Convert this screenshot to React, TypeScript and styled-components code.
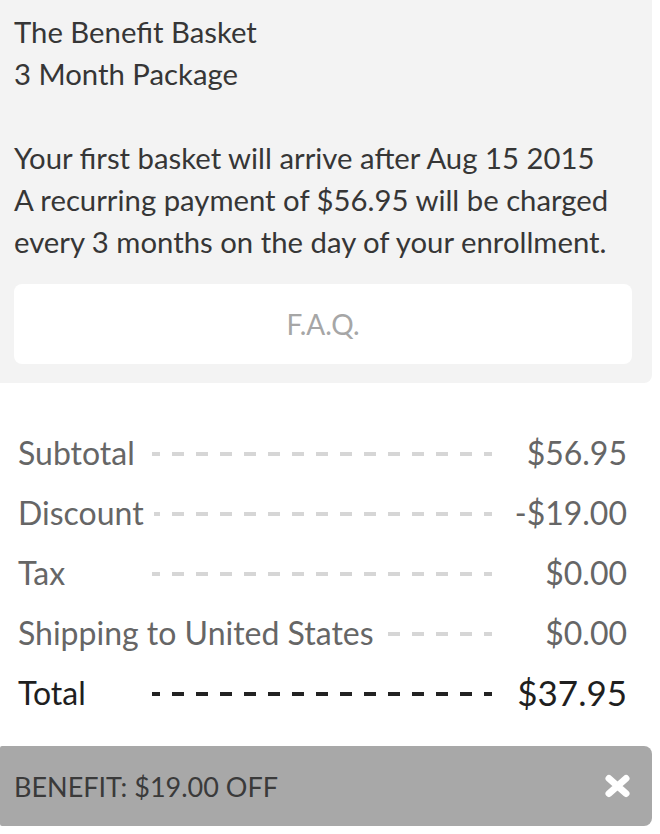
import React from 'react';
import styled, { createGlobalStyle } from 'styled-components';

const GlobalStyle = createGlobalStyle`
  body {
    margin: 0;
    background: #ffffff;
    font-family: 'Lato', 'Liberation Sans', sans-serif;
  }
`;

const Page = styled.div`
  width: 652px;
`;

const InfoPanel = styled.div`
  background: #f3f3f3;
  border-bottom-right-radius: 8px;
  padding: 11px 20px 19px 14px;
`;

const Lines = styled.p<{ gapBelow?: number }>`
  margin: 0 0 ${p => p.gapBelow || 0}px;
  font-size: 29.3px;
  line-height: 42px;
  color: #363636;
`;

const FaqButton = styled.button`
  display: block;
  width: 100%;
  height: 80px;
  margin-top: 1px;
  border: none;
  border-radius: 8px;
  background: #ffffff;
  color: #a6a6a6;
  font-family: inherit;
  font-size: 28px;
  cursor: pointer;
`;

const Summary = styled.div`
  padding: 39px 25px 0 18px;
`;

const Row = styled.div`
  display: grid;
  grid-template-columns: 474px 1fr;
  align-items: center;
  height: 60px;
`;

const LabelCell = styled.div<{ strong?: boolean }>`
  height: 100%;
  display: flex;
  align-items: center;
  background-image: repeating-linear-gradient(
    to right,
    ${p => (p.strong ? '#222222' : '#d6d6d6')} 0 8px,
    transparent 8px 20px,
    ${p => (p.strong ? '#222222' : '#d6d6d6')} 20px 24px
  );
  background-repeat: no-repeat;
  background-position: 134px calc(50% + 2px);
  background-size: calc(100% - 134px) 4px;
`;

const Label = styled.span<{ strong?: boolean }>`
  background: #ffffff;
  padding-right: 10px;
  font-size: 32px;
  color: ${p => (p.strong ? '#1f1f1f' : '#666666')};
`;

const Value = styled.span<{ strong?: boolean }>`
  text-align: right;
  font-size: ${p => (p.strong ? '35px' : '32px')};
  color: ${p => (p.strong ? '#1f1f1f' : '#666666')};
`;

const Banner = styled.div`
  margin-top: 24px;
  height: 80px;
  background: #a8a8a8;
  border-radius: 2px 8px 8px 2px;
  display: flex;
  align-items: center;
  justify-content: space-between;
  padding: 0 21px 0 14px;
  box-sizing: border-box;
`;

const BannerText = styled.span`
  font-size: 27px;
  color: #3a3a3a;
`;

const CloseButton = styled.button`
  border: none;
  background: none;
  padding: 0;
  display: flex;
  cursor: pointer;
`;

const rows = [
  { label: 'Subtotal', value: '$56.95' },
  { label: 'Discount', value: '-$19.00' },
  { label: 'Tax', value: '$0.00' },
  { label: 'Shipping to United States', value: '$0.00' },
];

export default function App() {
  return (
    <Page>
      <GlobalStyle />
      <InfoPanel>
        <Lines gapBelow={42}>
          The Benefit Basket
          <br />
          3 Month Package
        </Lines>
        <Lines gapBelow={21}>
          Your first basket will arrive after Aug 15 2015
          <br />
          A recurring payment of $56.95 will be charged every 3 months on the day of your enrollment.
        </Lines>
        <FaqButton>F.A.Q.</FaqButton>
      </InfoPanel>

      <Summary>
        {rows.map(r => (
          <Row key={r.label}>
            <LabelCell>
              <Label>{r.label}</Label>
            </LabelCell>
            <Value>{r.value}</Value>
          </Row>
        ))}
        <Row>
          <LabelCell strong>
            <Label strong>Total</Label>
          </LabelCell>
          <Value strong>$37.95</Value>
        </Row>
      </Summary>

      <Banner>
        <BannerText>BENEFIT: $19.00 OFF</BannerText>
        <CloseButton aria-label="Remove benefit">
          <svg width="27" height="24" viewBox="0 0 27 24">
            <path d="M5 4.5 L22 19.5 M22 4.5 L5 19.5" stroke="#ffffff" strokeWidth="7" strokeLinecap="round" fill="none" />
          </svg>
        </CloseButton>
      </Banner>
    </Page>
  );
}
